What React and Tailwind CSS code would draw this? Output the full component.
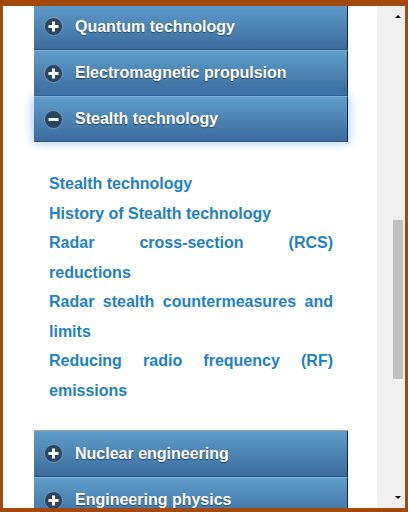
import React from "react";

const FONT = { fontFamily: '"Liberation Sans", Arial, sans-serif' };

function ToggleIcon({ open }) {
  return (
    <svg width="19" height="19" viewBox="0 0 19 19" className="shrink-0">
      <circle cx="9.5" cy="9.5" r="9" fill="#2b4663" stroke="#8fb4d4" strokeWidth="0.6" />
      <rect x="4.5" y="8" width="10" height="3" fill="#fff" />
      {!open && <rect x="8" y="4.5" width="3" height="10" fill="#fff" />}
    </svg>
  );
}

function Header({ title, open, first }) {
  return (
    <div
      className={`relative z-10 flex items-center h-[46px] pl-[10px] gap-[12px] bg-gradient-to-b from-[#5f9dca] to-[#3b6c9e] border-r border-r-[#0a2a5e] ${
        first ? "" : "border-t border-t-[#80b1d6]"
      } border-b border-b-[#2c5580] ${
        open ? "shadow-[0_0_10px_rgba(70,140,220,0.55)]" : ""
      }`}
    >
      <ToggleIcon open={open} />
      <span className="text-white font-bold text-[16px] [text-shadow:0_1px_1px_rgba(0,0,0,0.45)]">
        {title}
      </span>
    </div>
  );
}

const LINKS = [
  "Stealth technology",
  "History of Stealth technology",
  "Radar cross-section (RCS) reductions",
  "Radar stealth countermeasures and limits",
  "Reducing radio frequency (RF) emissions",
];

export default function App() {
  return (
    <div
      className="w-[408px] h-[512px] bg-[#a2490b] pt-[6px] pl-[3px] pr-[3px] pb-[4px]"
      style={FONT}
    >
      <div className="flex h-full bg-white">
        {/* content */}
        <div className="flex-1 overflow-hidden">
          <div className="-mt-[2px] ml-[31px] w-[314px]">
            <Header title="Quantum technology" first />
            <Header title="Electromagnetic propulsion" />
            <Header title="Stealth technology" open />
            <div className="px-[15px] pt-[27px] pb-[25px]">
              {LINKS.map((l) => (
                <div
                  key={l}
                  className="text-justify text-[16px] leading-[29.5px] font-bold text-[#1e80cc]"
                >
                  {l}
                </div>
              ))}
            </div>
            <div className="border-t border-t-[#9aa3ad]">
              <Header title="Nuclear engineering" first />
              <Header title="Engineering physics" />
            </div>
          </div>
        </div>

        {/* scrollbar */}
        <div className="w-[28px] h-full bg-[#f0f0f0] flex flex-col items-end pr-[2px]">
          <div className="h-[17px] w-[10px] flex items-center justify-center pt-[4px]">
            <div className="w-0 h-0 border-l-[3px] border-r-[3px] border-b-[3px] border-l-transparent border-r-transparent border-b-black" />
          </div>
          <div className="flex-1 w-[10px] flex flex-col">
            <div className="h-[197px]" />
            <div className="h-[159px] bg-[#c1c1c1]" />
          </div>
          <div className="h-[17px] w-[10px] flex items-center justify-center pb-[4px]">
            <div className="w-0 h-0 border-l-[3px] border-r-[3px] border-t-[3px] border-l-transparent border-r-transparent border-t-black" />
          </div>
        </div>
      </div>
    </div>
  );
}
